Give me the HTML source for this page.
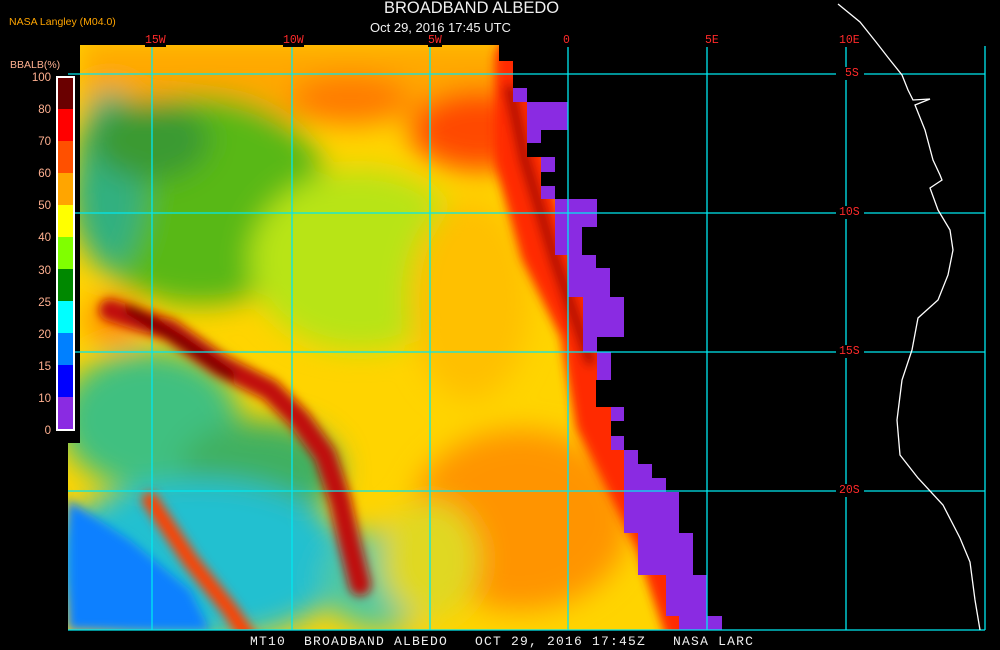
<!DOCTYPE html>
<html><head><meta charset="utf-8"><style>
html,body{margin:0;padding:0;background:#000;width:1000px;height:650px;overflow:hidden}
.t{position:absolute;white-space:nowrap;font-family:"Liberation Sans",sans-serif}
.m{position:absolute;white-space:pre;font-family:"Liberation Mono",monospace}
.r{color:#ff2a2a;font-size:11.5px;background:#000}
</style></head><body>
<svg width="1000" height="650" style="position:absolute;left:0;top:0" xmlns="http://www.w3.org/2000/svg">
<defs>
<clipPath id="dc"><polygon points="80,45 499,45 499,61 513,61 513,88 527,88 527,102 568,102 568,130 541,130 541,143 527,143 527,157 555,157 555,172 541,172 541,186 555,186 555,199 597,199 597,227 582,227 582,255 596,255 596,268 610,268 610,297 624,297 624,337 597,337 597,352 611,352 611,380 596,380 596,407 624,407 624,421 611,421 611,436 624,436 624,450 638,450 638,464 652,464 652,478 666,478 666,492 679,492 679,533 693,533 693,575 707,575 707,616 722,616 722,630 68,630 68,443 80,443"/></clipPath>
<filter id="b" x="-20%" y="-20%" width="140%" height="140%"><feGaussianBlur stdDeviation="14"/></filter>
<filter id="b2" x="-20%" y="-20%" width="140%" height="140%"><feGaussianBlur stdDeviation="5"/></filter>
</defs>
<g clip-path="url(#dc)">
<rect x="60" y="40" width="680" height="600" fill="#ffd400"/>
<g filter="url(#b)">
<rect x="80" y="40" width="450" height="80" fill="#ffa800"/>
<ellipse cx="480" cy="130" rx="70" ry="40" fill="#ff4a00"/>
<ellipse cx="350" cy="100" rx="60" ry="25" fill="#ff7a00"/>
<ellipse cx="200" cy="200" rx="130" ry="105" fill="#58b818"/>
<ellipse cx="110" cy="180" rx="35" ry="90" fill="#30b080"/>
<ellipse cx="150" cy="140" rx="60" ry="40" fill="#3a9a30"/>
<ellipse cx="360" cy="260" rx="110" ry="90" fill="#b8e418"/>
<ellipse cx="470" cy="300" rx="60" ry="100" fill="#ffc000"/>
<ellipse cx="150" cy="420" rx="90" ry="70" fill="#40c080"/>
<ellipse cx="260" cy="470" rx="80" ry="50" fill="#40b060"/>
<ellipse cx="200" cy="560" rx="150" ry="80" fill="#20c0d0"/>
<ellipse cx="380" cy="580" rx="60" ry="50" fill="#50c8a0"/>
<ellipse cx="520" cy="520" rx="110" ry="90" fill="#ff9400"/>
<ellipse cx="430" cy="560" rx="50" ry="60" fill="#e0d820"/>
<ellipse cx="115" cy="320" rx="30" ry="25" fill="#ff9000"/>
</g>
<polygon points="68,500 130,540 190,590 210,630 68,630" fill="#0a80ff" filter="url(#b2)"/>
<g filter="url(#b2)" fill="none" stroke-linecap="round">
<polyline points="110,310 170,330 220,365 270,390 300,420 325,455 340,500 350,545 360,585" stroke="#c01008" stroke-width="22"/>
<polyline points="130,310 180,340 230,375" stroke="#700000" stroke-width="10"/>
<polyline points="150,500 190,560 230,610 250,640" stroke="#ff4000" stroke-width="16"/>
<polyline points="520,60 520,160 545,250 585,330 600,420 630,480 660,540 690,630" stroke="#ff2a00" stroke-width="50"/>
<polyline points="510,90 525,160 555,260 590,360" stroke="#b01000" stroke-width="12"/>
</g>
</g>
<g fill="#8a2be2">
<rect x="513" y="88" width="14" height="14"/>
<rect x="527" y="102" width="41" height="28"/>
<rect x="527" y="130" width="14" height="13"/>
<rect x="541" y="157" width="14" height="15"/>
<rect x="541" y="186" width="14" height="13"/>
<rect x="555" y="199" width="42" height="28"/>
<rect x="555" y="227" width="27" height="28"/>
<rect x="568" y="255" width="28" height="13"/>
<rect x="568" y="268" width="42" height="29"/>
<rect x="583" y="297" width="41" height="40"/>
<rect x="583" y="337" width="14" height="15"/>
<rect x="597" y="352" width="14" height="28"/>
<rect x="611" y="407" width="13" height="14"/>
<rect x="611" y="436" width="13" height="14"/>
<rect x="624" y="450" width="14" height="14"/>
<rect x="624" y="464" width="28" height="14"/>
<rect x="624" y="478" width="42" height="14"/>
<rect x="624" y="492" width="55" height="41"/>
<rect x="638" y="533" width="55" height="42"/>
<rect x="666" y="575" width="41" height="41"/>
<rect x="679" y="616" width="43" height="14"/>
</g>
<g stroke="#00e8f0" stroke-width="1.3">
<line x1="152" y1="37" x2="152" y2="630"/><line x1="292" y1="37" x2="292" y2="630"/>
<line x1="430" y1="37" x2="430" y2="630"/><line x1="568" y1="37" x2="568" y2="630"/>
<line x1="707" y1="37" x2="707" y2="630"/><line x1="846" y1="46" x2="846" y2="630"/>
<line x1="985" y1="46" x2="985" y2="630"/>
<line x1="68" y1="74" x2="836" y2="74"/><line x1="864" y1="74" x2="985" y2="74"/>
<line x1="68" y1="213" x2="836" y2="213"/><line x1="864" y1="213" x2="985" y2="213"/>
<line x1="68" y1="352" x2="836" y2="352"/><line x1="864" y1="352" x2="985" y2="352"/>
<line x1="68" y1="491" x2="836" y2="491"/><line x1="864" y1="491" x2="985" y2="491"/>
<line x1="68" y1="630" x2="985" y2="630"/>
</g>
<polyline fill="none" stroke="#fff" stroke-width="1.3" points="838,4 860,22 876,42 890,60 902,75 908,90 913,100 930,99 915,105 925,130 933,160 940,175 942,180 930,188 938,210 950,230 953,250 948,275 938,300 918,318 912,350 902,380 897,420 900,455 918,478 943,505 960,538 970,562 975,600 980,630"/>
<rect x="56" y="76" width="19" height="355" fill="#fff"/>
<g>
<rect x="58" y="78" width="15" height="31" fill="#6a0000"/>
<rect x="58" y="109" width="15" height="32" fill="#ff0000"/>
<rect x="58" y="141" width="15" height="32" fill="#ff5000"/>
<rect x="58" y="173" width="15" height="32" fill="#ffa500"/>
<rect x="58" y="205" width="15" height="32" fill="#ffff00"/>
<rect x="58" y="237" width="15" height="32" fill="#80ff00"/>
<rect x="58" y="269" width="15" height="32" fill="#008800"/>
<rect x="58" y="301" width="15" height="32" fill="#00ffff"/>
<rect x="58" y="333" width="15" height="32" fill="#0080ff"/>
<rect x="58" y="365" width="15" height="32" fill="#0000ff"/>
<rect x="58" y="397" width="15" height="32" fill="#8a2be2"/>
</g>
</svg>
<div class="t" style="left:384px;top:-1px;font-size:16.5px;color:#f0f0f0">BROADBAND ALBEDO</div>
<div class="t" style="left:370px;top:20px;font-size:13px;color:#f0f0f0">Oct 29, 2016 17:45 UTC</div>
<div class="t" style="left:9px;top:16px;font-size:10.5px;color:#ffa500">NASA Langley (M04.0)</div>
<div class="t" style="left:10px;top:59px;font-size:10.5px;color:#ffb090">BBALB(%)</div>
<div class="t" style="left:0;top:62px;width:51px;text-align:right;font-size:11.5px;line-height:32.1px;color:#ffb090">100<br>80<br>70<br>60<br>50<br>40<br>30<br>25<br>20<br>15<br>10<br>0</div>
<div class="m r" style="left:145px;top:34px">15W</div>
<div class="m r" style="left:283px;top:34px">10W</div>
<div class="m r" style="left:428px;top:34px">5W</div>
<div class="m r" style="left:563px;top:34px">0</div>
<div class="m r" style="left:705px;top:34px">5E</div>
<div class="m r" style="left:839px;top:34px">10E</div>
<div class="m r" style="left:845px;top:67px">5S</div>
<div class="m r" style="left:839px;top:206px">10S</div>
<div class="m r" style="left:839px;top:345px">15S</div>
<div class="m r" style="left:839px;top:484px">20S</div>
<div class="m" style="left:250px;top:634px;font-size:13px;letter-spacing:1.2px;color:#f0f0f0">MT10  BROADBAND ALBEDO   OCT 29, 2016 17:45Z   NASA LARC</div>
</body></html>
